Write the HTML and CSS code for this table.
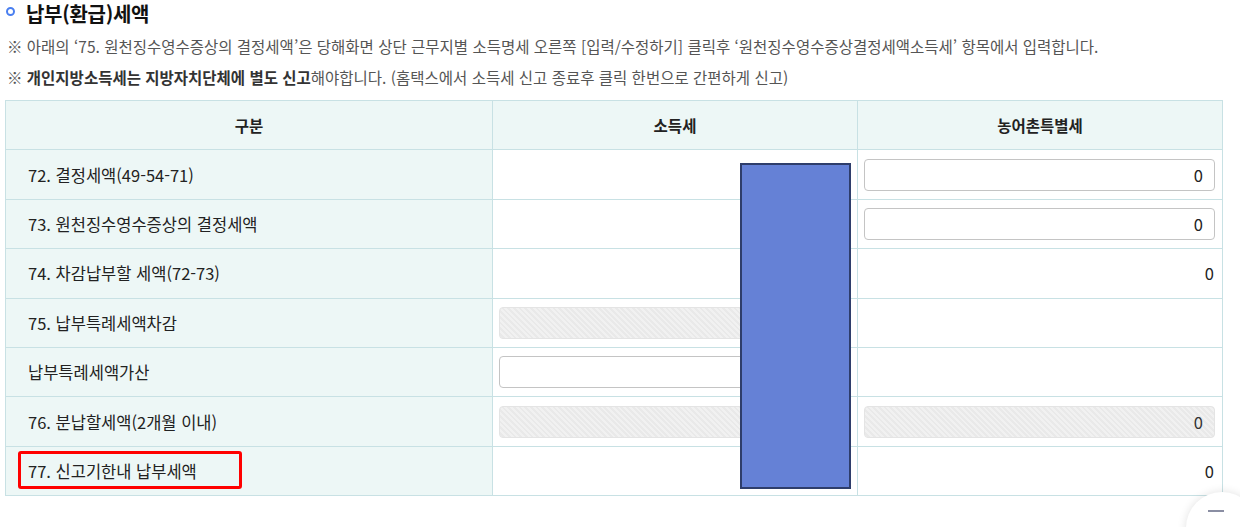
FILE: index.html
```html
<!DOCTYPE html>
<html lang="ko">
<head>
    <meta charset="UTF-8">
    <meta name="viewport" content="width=device-width, initial-scale=1.0">
    <title>납부(환급)세액</title>
    <link rel="stylesheet" href="styles.css">
</head>
<body>
    <div class="page">
        <h2 class="section-title"><span class="dot"></span>납부(환급)세액</h2>

        <div class="notice">
            <p>※ 아래의 ‘75. 원천징수영수증상의 결정세액’은 당해화면 상단 근무지별 소득명세 오른쪽 [입력/수정하기] 클릭후 ‘원천징수영수증상결정세액소득세’ 항목에서 입력합니다.</p>
            <p>※ <b>개인지방소득세는 지방자치단체에 별도 신고</b>해야합니다. (홈택스에서 소득세 신고 종료후 클릭 한번으로 간편하게 신고)</p>
        </div>

        <div class="table-wrap">
            <table class="tax-table">
                <colgroup>
                    <col class="col-label">
                    <col class="col-val">
                    <col class="col-val">
                </colgroup>
                <thead>
                    <tr>
                        <th>구분</th>
                        <th>소득세</th>
                        <th>농어촌특별세</th>
                    </tr>
                </thead>
                <tbody>
                    <tr>
                        <td class="label">72. 결정세액(49-54-71)</td>
                        <td></td>
                        <td class="field"><input type="text" value="0"></td>
                    </tr>
                    <tr>
                        <td class="label">73. 원천징수영수증상의 결정세액</td>
                        <td></td>
                        <td class="field"><input type="text" value="0"></td>
                    </tr>
                    <tr>
                        <td class="label">74. 차감납부할 세액(72-73)</td>
                        <td></td>
                        <td class="num">0</td>
                    </tr>
                    <tr>
                        <td class="label">75. 납부특례세액차감</td>
                        <td class="field"><input type="text" disabled></td>
                        <td></td>
                    </tr>
                    <tr>
                        <td class="label">납부특례세액가산</td>
                        <td class="field"><input type="text"></td>
                        <td></td>
                    </tr>
                    <tr>
                        <td class="label">76. 분납할세액(2개월 이내)</td>
                        <td class="field"><input type="text" disabled></td>
                        <td class="field"><input type="text" value="0" disabled></td>
                    </tr>
                    <tr>
                        <td class="label">77. 신고기한내 납부세액</td>
                        <td></td>
                        <td class="num">0</td>
                    </tr>
                </tbody>
            </table>

            <div class="mask"></div>
            <div class="highlight"></div>
        </div>
    </div>

    <button class="fab" type="button" aria-label="접기"><span></span></button>
</body>
</html>
```

FILE: styles.css
```css
body {
    margin: 0;
    padding: 0;
    background: #ffffff;
    font-family: "Noto Sans CJK KR", "Noto Sans", sans-serif;
    color: #222222;
    overflow: hidden;
}

.page {
    padding: 0 0 0 5px;
}

.section-title {
    display: flex;
    align-items: center;
    gap: 11px;
    height: 25px;
    margin: 0;
    padding: 2px 0 0 1px;
    box-sizing: border-box;
    font-size: 20px;
    line-height: 23px;
    font-weight: bold;
    color: #111111;
    letter-spacing: -0.3px;
}

.dot {
    flex-shrink: 0;
    width: 5px;
    height: 5px;
    margin-bottom: 5px;
    border: 2.5px solid #4a7ff0;
    border-radius: 50%;
}

.notice {
    margin-top: 6px;
    padding-left: 2px;
}

.notice p {
    margin: 0;
    font-size: 15.5px;
    line-height: 31px;
    color: #555555;
    white-space: nowrap;
}

.notice b {
    color: #333333;
}

.table-wrap {
    position: relative;
    width: 1217px;
    margin-top: 7px;
}

.tax-table {
    width: 1217px;
    border-collapse: collapse;
    table-layout: fixed;
    border: 1px solid #c8e1e4;
}

.col-label {
    width: 487px;
}

.col-val {
    width: 365px;
}

.tax-table th,
.tax-table td {
    height: 49.4px;
    padding: 0;
    border: 1px solid #c8e1e4;
    box-sizing: border-box;
}

.tax-table th {
    background: #edf7f6;
    font-size: 15.5px;
    font-weight: bold;
    color: #222222;
    text-align: center;
}

.tax-table td.label {
    background: #edf7f6;
    padding-left: 22px;
    font-size: 16.5px;
    color: #222222;
}

.tax-table td.num {
    text-align: right;
    padding-right: 8px;
    font-size: 16.5px;
}

.tax-table td.field {
    padding: 0 7px 0 6px;
}

.field input {
    display: block;
    width: 100%;
    height: 32px;
    box-sizing: border-box;
    padding: 0 11px;
    border: 1px solid #c4c4c4;
    border-radius: 4px;
    background: #ffffff;
    font-family: inherit;
    font-size: 16.5px;
    color: #222222;
    text-align: right;
}

.field input:disabled {
    border-color: #e4e4e4;
    background: repeating-linear-gradient(45deg, #f1f1f1 0 2px, #e9e9e9 2px 4px);
    color: #333333;
}

.mask {
    position: absolute;
    left: 735px;
    top: 63px;
    width: 111px;
    height: 326px;
    box-sizing: border-box;
    background: #6581d6;
    border: 2px solid #2e3d6b;
}

.highlight {
    position: absolute;
    left: 13px;
    top: 351px;
    width: 224px;
    height: 38px;
    box-sizing: border-box;
    border: 3px solid #ff0000;
    border-radius: 3px;
}

.fab {
    position: fixed;
    left: 1186px;
    top: 492px;
    width: 72px;
    height: 72px;
    padding: 0;
    border: none;
    border-radius: 50%;
    background: #ffffff;
    box-shadow: 0 0 10px rgba(0, 0, 0, 0.12);
}

.fab span {
    position: absolute;
    left: 22px;
    top: 18px;
    width: 16px;
    height: 2px;
    background: #8a8ea3;
}
```
